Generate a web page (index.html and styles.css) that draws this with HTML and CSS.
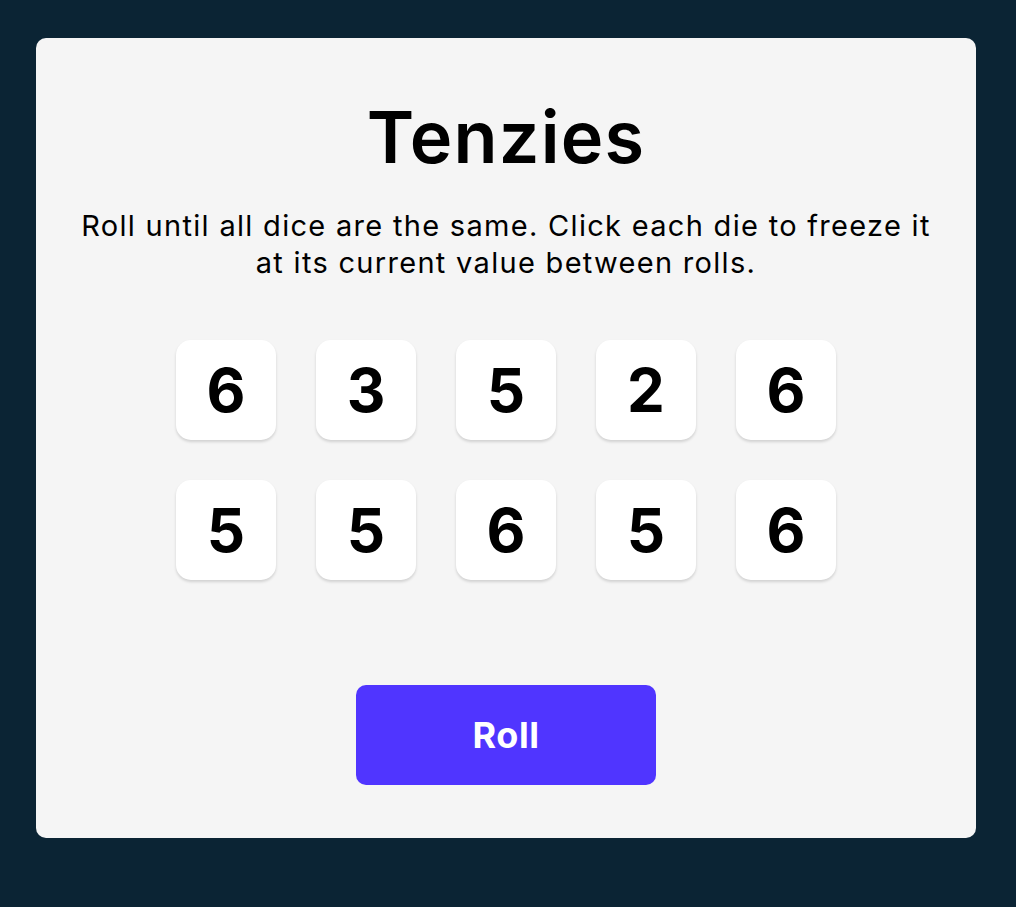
FILE: index.html
```html
<!DOCTYPE html>
<html lang="en">
<head>
<meta charset="utf-8">
<title>Tenzies</title>
<link rel="stylesheet" href="styles.css">
</head>
<body>
<main class="card">
  <h1 class="title">Tenzies</h1>
  <p class="instructions">Roll until all dice are the same. Click each die to freeze it at its current value between rolls.</p>
  <div class="dice">
    <button class="die">6</button>
    <button class="die">3</button>
    <button class="die">5</button>
    <button class="die">2</button>
    <button class="die">6</button>
    <button class="die">5</button>
    <button class="die">5</button>
    <button class="die">6</button>
    <button class="die">5</button>
    <button class="die">6</button>
  </div>
  <button class="roll">Roll</button>
</main>
</body>
</html>
```
FILE: styles.css
```css
html, body {
  margin: 0;
  background: #0B2434;
}
body {
  padding: 38px 40px 0 36px;
  height: 907px;
  box-sizing: border-box;
  font-family: Inter, "Noto Sans", sans-serif;
}
.card {
  height: 800px;
  box-sizing: border-box;
  background: #F5F5F5;
  border-radius: 10px;
  padding-top: 63px;
  display: flex;
  flex-direction: column;
  align-items: center;
}
.title {
  margin: 0;
  font-size: 72px;
  line-height: 72px;
  font-weight: 600;
  letter-spacing: 1.2px;
  color: #000;
}
.instructions {
  margin: 34px 0 0;
  padding: 0 40px;
  font-size: 29px;
  line-height: 37px;
  font-weight: 400;
  letter-spacing: 1.3px;
  text-align: center;
  color: #000;
}
.dice {
  margin-top: 59px;
  display: grid;
  grid-template-columns: repeat(5, 100px);
  grid-auto-rows: 100px;
  gap: 40px;
}
.die {
  border: none;
  background: #fff;
  border-radius: 15px;
  box-shadow: 0 2px 3px rgba(0, 0, 0, 0.15);
  font-family: Inter, sans-serif;
  font-size: 60px;
  font-weight: 700;
  color: #000;
  display: flex;
  align-items: center;
  justify-content: center;
  padding: 0;
}
.roll {
  margin-top: 105px;
  width: 300px;
  height: 100px;
  border: none;
  border-radius: 10px;
  background: #5035FF;
  color: #fff;
  font-family: Inter, sans-serif;
  font-size: 36px;
  font-weight: 700;
  letter-spacing: 0.5px;
}
```
